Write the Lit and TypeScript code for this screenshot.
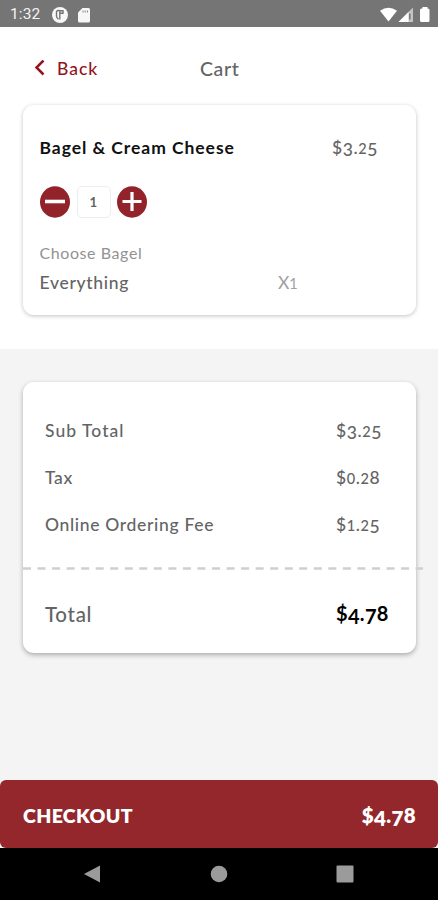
import { LitElement, html, css, svg } from "lit";
import { customElement, property } from "lit/decorators.js";

/** Amount set in old-style figures: 0-2 at x-height, 3/4/5/7/9 descending. */
@customElement("old-style")
export class OldStyle extends LitElement {
  @property() value = "";

  static styles = css`
    :host { display: inline-block; white-space: nowrap; }
    .low { font-size: 0.83em; line-height: 1; letter-spacing: 0.04em; }
    .drop { line-height: 1; vertical-align: -0.14em; }
  `;

  render() {
    return [...this.value].map((c) =>
      "012".includes(c)
        ? html`<span class="low">${c}</span>`
        : "34579".includes(c)
          ? html`<span class="drop">${c}</span>`
          : html`${c}`
    );
  }
}

@customElement("app-root")
export class AppRoot extends LitElement {
  static styles = css`
    :host {
      display: flex;
      flex-direction: column;
      width: 438px;
      height: 900px;
      overflow: hidden;
      background: #f4f4f4;
      color: #646464;
      font: 500 17.5px/24px Lato, "Open Sans", sans-serif;
      white-space: nowrap;
    }
    * { box-sizing: border-box; }
    svg { display: block; flex: none; }
    .status {
      height: 27px;
      flex: none;
      display: flex;
      align-items: center;
      padding: 2px 8px 0 10px;
      background: #757575;
      color: #f4f4f4;
      font: 400 15.5px/25px Roboto, sans-serif;
    }
    .time { width: 41px; letter-spacing: 0.1px; }
    .right { margin-left: auto; }
    .top { height: 322px; flex: none; background: #fff; }
    .nav { height: 78px; display: flex; align-items: center; padding: 5px 0 0 34px; }
    .back { display: flex; align-items: center; width: 166px; color: #94141d; }
    .back span { margin-left: 11px; font-size: 17.5px; letter-spacing: 1px; }
    .title { font-size: 19.5px; letter-spacing: 0.6px; }
    .card { margin: 0 22px 0 23px; background: #fff; border-radius: 11px; }
    .item {
      height: 210px;
      padding: 31px 0 0 16.5px;
      box-shadow: 0 1px 4px rgba(0, 0, 0, 0.24);
    }
    .line { display: flex; align-items: center; }
    .name { width: 292.5px; color: #111; font-size: 17.5px; font-weight: 700; letter-spacing: 0.95px; }
    .price { letter-spacing: 0.6px; }
    .stepper { display: flex; align-items: center; margin-top: 26px; height: 32px; }
    .qty {
      width: 34px;
      height: 32px;
      margin: 0 6px 0 7px;
      border: 1px solid #ededed;
      border-radius: 5px;
      text-align: center;
      font-weight: 700;
      font-size: 16px;
      line-height: 28px;
    }
    .group { margin-top: 23px; font-size: 16px; line-height: 24px; font-weight: 400; color: #929292; letter-spacing: 0.58px; }
    .line.option { margin-top: 6px; }
    .choice { width: 238.5px; letter-spacing: 0.7px; }
    .count { color: #a0a0a0; font-weight: 400; }
    .summary {
      height: 271px;
      margin-top: 33px;
      flex: none;
      padding-top: 25px;
      box-shadow: 0 2px 5px rgba(0, 0, 0, 0.3);
    }
    .row { display: flex; align-items: center; height: 47px; padding-left: 22px; }
    .label { width: 291px; letter-spacing: 0.67px; }
    .row:first-child .label { letter-spacing: 1.05px; }
    .dashes { margin-top: 19px; overflow: visible; }
    .row.total { margin-top: 20px; font-size: 20px; }
    .total .label { font-size: 20.5px; letter-spacing: 0.7px; }
    .sum { color: #000; font-weight: 700; letter-spacing: 0.3px; }
    .checkout {
      height: 68px;
      flex: none;
      margin-top: auto;
      display: flex;
      align-items: center;
      justify-content: space-between;
      padding: 3px 22px 0 23px;
      border-radius: 6px;
      background: #93272c;
      color: #fff;
      font-size: 19.5px;
      font-weight: 800;
      letter-spacing: 0.35px;
    }
    .checkout old-style { font-size: 20.5px; }
    .system {
      height: 52px;
      flex: none;
      display: flex;
      align-items: center;
      justify-content: space-between;
      padding: 0 84px;
      background: #000;
    }
  `;

  private rows = [
    ["Sub Total", "$3.25"],
    ["Tax", "$0.28"],
    ["Online Ordering Fee", "$1.25"],
  ];

  private round(sign: unknown) {
    return html`<svg width="30" height="32" viewBox="0 0 30 32">
      <ellipse cx="15" cy="16" rx="15" ry="15.7" fill="#93232a" />
      ${sign}
    </svg>`;
  }

  render() {
    return html`
      <div class="status">
        <span class="time">1:32</span>
        <svg width="40" height="18" viewBox="0 0 40 18">
          <circle cx="9" cy="9" r="8" fill="#f7f7f7" />
          <path d="M8.500 4.500H7.200Q5.500 4.500 5.500 6.500V10Q5.500 12 7.500 13M8.800 4v9.500M9 4.700h3v2.600H9" fill="none" stroke="#757575" stroke-width="1.400" />
          <path d="M31.500 2H37.500q1.500 0 1.500 1.500V15q0 1.500-1.500 1.500H28.500Q27 16.500 27 15V6.500z" fill="#f7f7f7" />
          <path d="M32 4.500v2M34.200 4.500v2M36.400 4.500v2" stroke="#858585" stroke-width="1" />
        </svg>
        <svg class="right" width="50" height="18" viewBox="0 0 50 18">
          <path d="M0 4.800Q8.500-1.500 17 4.800L8.500 15.500z" fill="#fff" />
          <path d="M33 1.500v14.500H18.500z" fill="#c4c4c4" />
          <path d="M28.500 6V16h-10z" fill="#fff" />
          <path d="M29.800 7.500v6" stroke="#757575" stroke-width="1.500" />
          <path d="M42.500 1h5V2.500h0.500q1.500 0 1.500 1.500V14.500q0 1.500-1.500 1.500h-6.500Q40 16 40 14.500V4Q40 2.500 41.500 2.500H42.500z" fill="#fff" />
        </svg>
      </div>

      <div class="top">
        <div class="nav">
          <div class="back">
            <svg width="12" height="18" viewBox="0 0 12 18">
              <path d="M9.500 0.500L2.500 7.500L9.500 14.500" fill="none" stroke="#94141d" stroke-width="2.500" />
            </svg>
            <span>Back</span>
          </div>
          <div class="title">Cart</div>
        </div>
        <div class="card item">
          <div class="line">
            <span class="name">Bagel &amp; Cream Cheese</span>
            <old-style class="price" value="$3.25"></old-style>
          </div>
          <div class="stepper">
            ${this.round(svg`<path d="M5 15.500h20" stroke="#fff" stroke-width="3.600" />`)}
            <div class="qty"><old-style value="1"></old-style></div>
            ${this.round(svg`<path d="M5.500 15.500h19M15 6v19" stroke="#fff" stroke-width="3.200" />`)}
          </div>
          <div class="group">Choose Bagel</div>
          <div class="line option">
            <span class="choice">Everything</span>
            <old-style class="count" value="X1"></old-style>
          </div>
        </div>
      </div>

      <div class="card summary">
        ${this.rows.map(
          ([label, amount]) => html`<div class="row">
            <span class="label">${label}</span>
            <old-style class="price" value=${amount}></old-style>
          </div>`
        )}
        <svg class="dashes" width="400" height="3" viewBox="0 0 400 3">
          <path d="M0 1.500H400" stroke="#cfcfcf" stroke-width="2.400" stroke-dasharray="8 6.540" />
        </svg>
        <div class="row total">
          <span class="label">Total</span>
          <old-style class="sum" value="$4.78"></old-style>
        </div>
      </div>

      <div class="checkout">
        <span>CHECKOUT</span>
        <old-style value="$4.78"></old-style>
      </div>
      <div class="system">
        <svg width="17" height="18" viewBox="0 0 17 18"><path d="M0 9L16 0.500V17.500z" fill="#9b9b9b" /></svg>
        <svg width="18" height="18" viewBox="0 0 18 18"><circle cx="9" cy="9" r="8.300" fill="#9b9b9b" /></svg>
        <svg width="18" height="18" viewBox="0 0 18 18"><rect x="0.500" y="0.500" width="17" height="17" rx="1" fill="#9b9b9b" /></svg>
      </div>
    `;
  }
}
